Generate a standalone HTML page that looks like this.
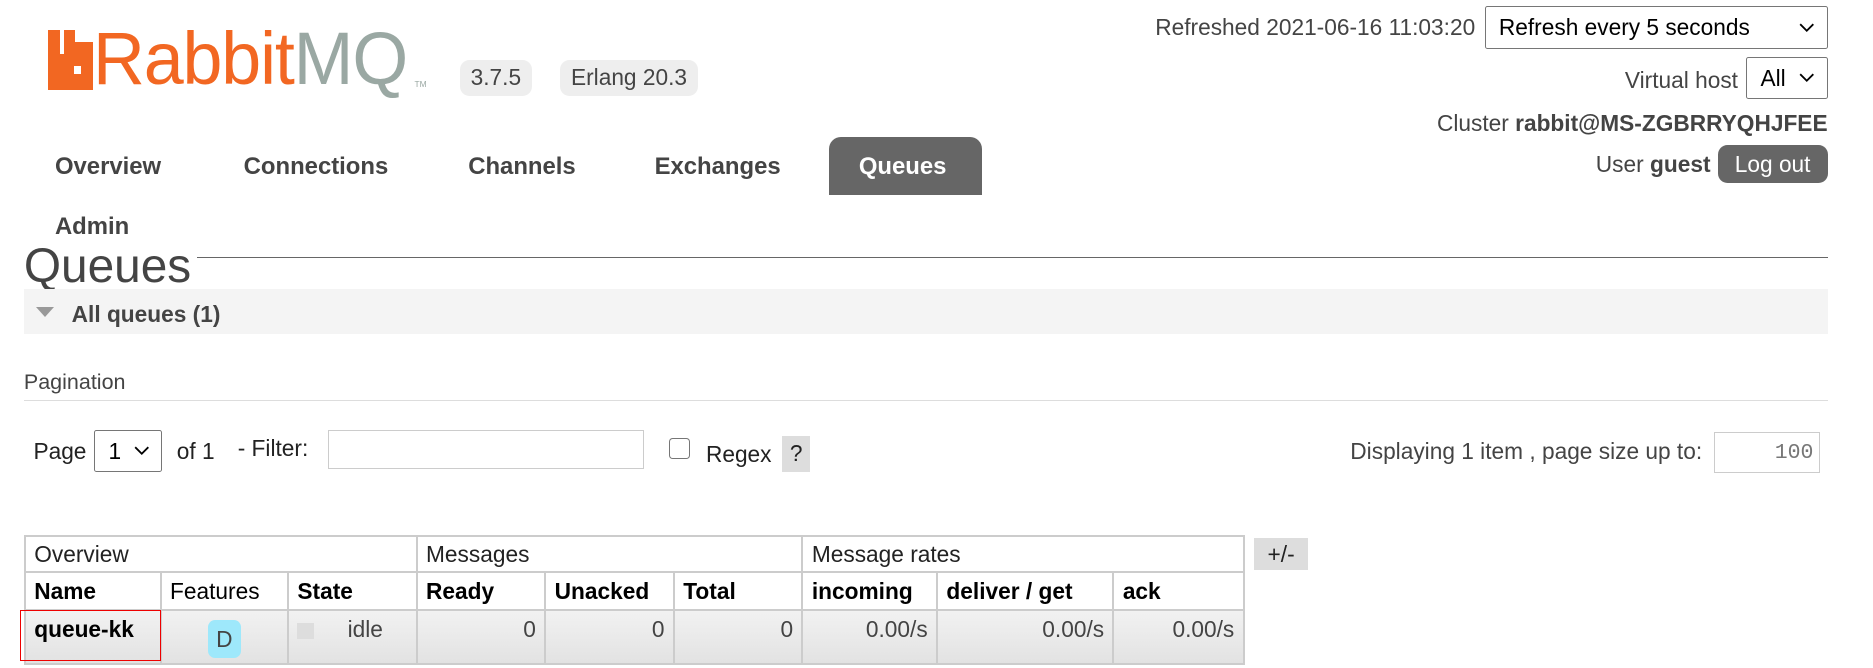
<!DOCTYPE html>
<html><head><meta charset="utf-8"><style>
html,body{margin:0;padding:0;background:#fff;overflow:hidden}
body{width:1873px;height:668px}
#w{zoom:1.1945;width:1568px;height:560px;position:relative;font-family:"Liberation Sans",sans-serif;color:#444;font-size:19px}
.a{position:absolute;white-space:nowrap}
.badge{background:#eee;border-radius:8px;height:30px;line-height:30px;padding:0 9px;font-size:19px;color:#444}
.nav{font-weight:bold;font-size:20px;color:#444}
.sel{border:1px solid #767676;border-radius:2px;background:#fff;color:#000;box-sizing:border-box}
.chev{position:absolute;right:10px;top:50%;margin-top:-4px}
table{border-collapse:collapse;font-size:19px}
td,th{border:2px solid #ccc;padding:0 7px;height:28px;text-align:left}
</style></head><body><div id="w">
<!-- logo -->
<div class="a" style="left:40px;top:25px;width:38px;height:50px">
<div class="a" style="left:0;top:0;width:10px;height:20px;background:#f26722"></div>
<div class="a" style="left:14px;top:0;width:9px;height:20px;background:#f26722"></div>
<div class="a" style="left:0;top:20px;width:38px;height:30px;background:#f26722"></div>
<div class="a" style="left:22px;top:10px;width:16px;height:12px;background:#f26722"></div>
<div class="a" style="left:22px;top:30px;width:6px;height:7px;background:#fff"></div>
</div>
<div class="a" style="left:78px;top:18px;font-size:62px;line-height:62px;transform:scaleX(0.97);transform-origin:0 0;letter-spacing:-1px"><span style="color:#f26722">Rabbit</span><span style="color:#9aa8a3">MQ</span></div>
<div class="a" style="left:347px;top:66px;font-size:7px;color:#9aa8a3">TM</div>
<div class="a badge" style="left:385px;top:50px">3.7.5</div>
<div class="a badge" style="left:469px;top:50px">Erlang 20.3</div>
<!-- nav -->
<div class="a nav" style="left:46px;top:128px">Overview</div>
<div class="a nav" style="left:204px;top:128px">Connections</div>
<div class="a nav" style="left:392px;top:128px">Channels</div>
<div class="a nav" style="left:548px;top:128px">Exchanges</div>
<div class="a" style="left:694px;top:115px;width:128px;height:48px;background:#666;border-radius:10px 10px 0 0"></div>
<div class="a nav" style="left:719px;top:128px;color:#fff">Queues</div>
<div class="a nav" style="left:46px;top:178px">Admin</div>
<!-- right -->
<div class="a" style="right:333px;top:12px">Refreshed 2021-06-16 11:03:20</div>
<div class="a sel" style="left:1243px;top:5px;width:287px;height:36px;padding:6px 11px;font-size:19px">Refresh every 5 seconds<svg class="chev" width="13" height="8" viewBox="0 0 13 8"><path d="M1 1l5.5 5.5L12 1" fill="none" stroke="#000" stroke-width="1.5"/></svg></div>
<div class="a" style="right:113px;top:56px">Virtual host</div>
<div class="a sel" style="left:1462px;top:48px;width:68px;height:35px;padding:6px 11px;font-size:19px">All<svg class="chev" width="13" height="8" viewBox="0 0 13 8"><path d="M1 1l5.5 5.5L12 1" fill="none" stroke="#000" stroke-width="1.5"/></svg></div>
<div class="a" style="right:38px;top:92px">Cluster <b>rabbit@MS-ZGBRRYQHJFEE</b></div>
<div class="a" style="right:136px;top:126px">User <b>guest</b></div>
<div class="a" style="left:1438px;top:121px;width:92px;height:32px;background:#666;border-radius:8px;color:#fff;text-align:center;line-height:32px">Log out</div>
<!-- h1 -->
<div class="a" style="left:165px;top:215px;width:1365px;height:1px;background:#666"></div>
<div class="a" style="left:20px;top:208px;width:400px;height:40px;overflow:hidden"><div style="font-size:40px;margin-top:-8px;color:#444">Queues</div></div>
<div class="a" style="left:20px;top:242px;width:1510px;height:38px;background:#f4f4f4"></div>
<div class="a" style="left:30px;top:257px;width:0;height:0;border-left:8px solid transparent;border-right:8px solid transparent;border-top:9px solid #999"></div>
<div class="a" style="left:60px;top:252px;font-weight:bold">All queues (1)</div>
<div class="a" style="left:20px;top:310px;font-size:18px">Pagination</div>
<div class="a" style="left:20px;top:335px;width:1510px;height:1px;background:#ddd"></div>
<!-- pagination row -->
<div class="a" style="left:28px;top:367px;color:#222">Page</div>
<div class="a sel" style="left:79px;top:360px;width:57px;height:35px;padding:6px 11px">1<svg class="chev" width="13" height="8" viewBox="0 0 13 8"><path d="M1 1l5.5 5.5L12 1" fill="none" stroke="#000" stroke-width="1.5"/></svg></div>
<div class="a" style="left:148px;top:367px;color:#222">of 1</div>
<div class="a" style="left:199px;top:364px;color:#222">- Filter:</div>
<div class="a" style="left:275px;top:360px;width:264px;height:33px;border:1px solid #ccc;box-sizing:border-box"></div>
<div class="a" style="left:560px;top:367px;width:16px;height:16px;border:1px solid #767676;border-radius:3px"></div>
<div class="a" style="left:591px;top:369px;color:#222">Regex</div>
<div class="a" style="left:655px;top:365px;width:23px;height:30px;background:#ddd;text-align:center;line-height:30px;color:#222">?</div>
<div class="a" style="right:143px;top:367px">Displaying 1 item , page size up to:</div>
<div class="a" style="left:1435px;top:362px;width:89px;height:34px;border:1px solid #ccc;box-sizing:border-box;text-align:right;padding:6px 5px;color:#777;font-family:'Liberation Mono',monospace;font-size:18px">100</div>
<!-- table -->
<table class="a" style="left:20px;top:448px;width:1022px">
<tr style="height:30px"><td colspan="3" style="color:#222">Overview</td><td colspan="3" style="color:#222">Messages</td><td colspan="3" style="color:#222">Message rates</td></tr>
<tr style="height:32px;color:#000"><th style="width:98px">Name</th><th style="font-weight:normal;width:91px">Features</th><th style="width:92px">State</th><th style="width:92px">Ready</th><th style="width:92px">Unacked</th><th style="width:92px">Total</th><th style="width:97px">incoming</th><th style="width:132px">deliver / get</th><th>ack</th></tr>
<tr style="height:45px;background:linear-gradient(#f2f2f2,#e2e2e2);color:#444;vertical-align:top"><td style="font-weight:bold;color:#000;padding-top:4px">queue-kk</td><td style="text-align:center;padding-top:7px"><span style="display:inline-block;background:#9ee8fb;border-radius:6px;width:28px;height:32px;line-height:32px">D</span></td><td style="padding-top:4px"><span style="display:inline-block;width:14px;height:14px;background:#ddd;vertical-align:middle"></span><span style="margin-left:28px">idle</span></td><td style="text-align:right;padding-top:4px">0</td><td style="text-align:right;padding-top:4px">0</td><td style="text-align:right;padding-top:4px">0</td><td style="text-align:right;padding-top:4px">0.00/s</td><td style="text-align:right;padding-top:4px">0.00/s</td><td style="text-align:right;padding-top:4px">0.00/s</td></tr>
</table>
<div class="a" style="left:17px;top:511px;width:118px;height:42px;border:1.5px solid #e00;box-sizing:border-box"></div>
<div class="a" style="left:1050px;top:450px;width:45px;height:27px;background:#ddd;text-align:center;line-height:27px;color:#222">+/-</div>
</div></body></html>
